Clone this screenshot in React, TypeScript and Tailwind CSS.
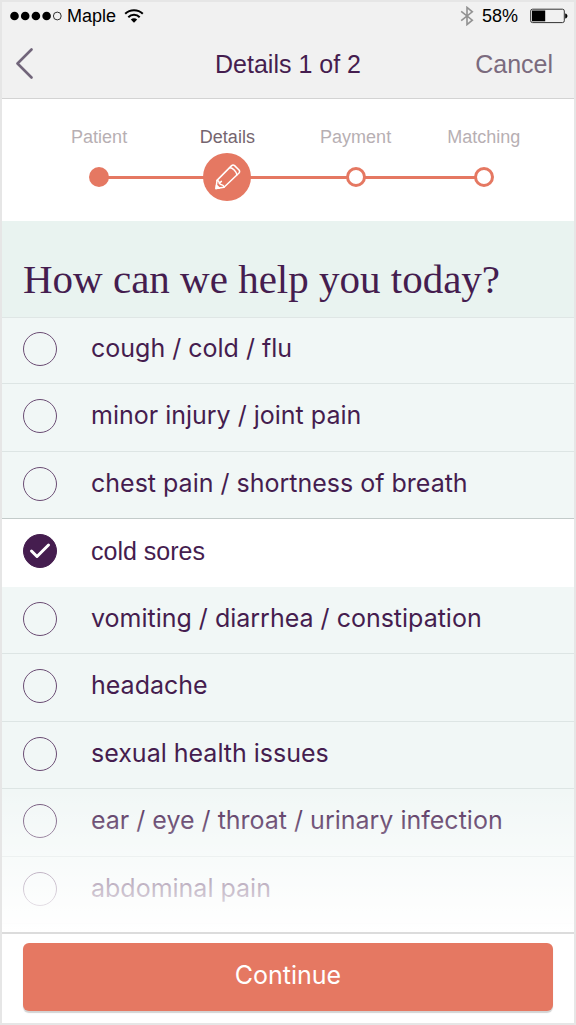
import { useState } from "react";

const steps = ["Patient", "Details", "Payment", "Matching"];
const currentStep = 1;

const symptoms = [
  "cough / cold / flu",
  "minor injury / joint pain",
  "chest pain / shortness of breath",
  "cold sores",
  "vomiting / diarrhea / constipation",
  "headache",
  "sexual health issues",
  "ear / eye / throat / urinary infection",
  "abdominal pain",
];

function StatusBar() {
  return (
    <div className="flex h-7 items-center justify-between pr-1.5 pl-2 text-[18px] leading-5 text-black">
      <div className="flex items-center">
        <svg width="53" height="12" viewBox="0 0 53 12" className="mr-1" aria-label="Signal strength">
          <circle cx="4.5" cy="6" r="4.3" />
          <circle cx="15.2" cy="6" r="4.3" />
          <circle cx="25.9" cy="6" r="4.3" />
          <circle cx="36.6" cy="6" r="4.3" />
          <circle cx="47.3" cy="6" r="3.9" fill="none" stroke="black" strokeWidth="0.8" />
        </svg>
        <span>Maple</span>
        <svg width="20" height="14" viewBox="0 0 20 14" className="ml-2" fill="none" stroke="black" strokeWidth="2" aria-label="Wi-Fi">
          <path d="M1.2 4.8 C6 0 14 0 18.8 4.8" />
          <path d="M4.3 8.2 C7.4 5 12.6 5 15.7 8.2" />
          <path d="M6.8 10.5 C8.6 8.8 11.4 8.8 13.2 10.5 L10 13.7 Z" fill="black" stroke="none" />
        </svg>
      </div>
      <div className="flex items-center">
        <svg width="14" height="20" viewBox="0 0 14 20" className="mr-2" fill="none" stroke="#929292" strokeWidth="1.6" aria-label="Bluetooth">
          <path d="M1.2 5.3 L12.3 14.2 L7 18.6 V1.4 L12.3 5.8 L1.2 14.7" />
        </svg>
        <span>58%</span>
        <svg width="38" height="16" viewBox="0 0 38 16" className="ml-3" aria-label="Battery">
          <rect x="0.7" y="1.2" width="33.6" height="13.4" rx="1.8" fill="none" stroke="#333" strokeWidth="1" />
          <rect x="2" y="2.5" width="13.2" height="10.8" />
          <path d="M35.2 5.4 C38.2 6 38.2 10 35.2 10.6 Z" />
        </svg>
      </div>
    </div>
  );
}

function NavBar() {
  return (
    <nav className="grid h-[68px] grid-cols-[1fr_auto_1fr] items-center px-[21px] text-[25px] leading-8">
      <button type="button" aria-label="Back" className="-ml-2 justify-self-start">
        <svg width="19" height="32" viewBox="0 0 19 32" fill="none" stroke="#71657a" strokeWidth="2.6" strokeLinecap="round" strokeLinejoin="round">
          <path d="M16.5 1.5 L2.5 15.5 L16.5 29.5" />
        </svg>
      </button>
      <h1 className="text-[#451d4f]">Details 1 of 2</h1>
      <button type="button" className="justify-self-end text-[#7b6b7e]">
        Cancel
      </button>
    </nav>
  );
}

function StepMarker({ index }: { index: number }) {
  if (index === currentStep) {
    return (
      <span className="relative flex size-12 items-center justify-center rounded-full bg-[#e57862]">
        <svg width="28" height="28" viewBox="0 0 28 28" fill="none" stroke="white" strokeWidth="1.5" strokeLinecap="round" strokeLinejoin="round" aria-hidden="true">
          <path d="M3 25.6 L4 17.4 L18.6 2.6 Q20 1.4 21.6 2.6 L26 7 Q27.2 8.6 26 10 L11 24.2 Z" />
          <path d="M16.6 4.8 Q18.8 4.6 21.2 7 Q24 9.8 23.8 12" />
          <path d="M4 17.4 Q6 17.6 6.4 20.2 Q7.2 21.8 8.6 21.8 Q10.6 22 11 24.2" />
          <path d="M6.4 20.2 L8.4 18.4" />
          <path d="M3 25.6 L3.5 22.2 L6.4 25 Z" fill="white" />
        </svg>
      </span>
    );
  }
  return (
    <span
      className={
        index < currentStep
          ? "relative size-5 rounded-full bg-[#e57862]"
          : "relative size-5 rounded-full border-3 border-[#e57862] bg-white"
      }
    />
  );
}

function Stepper() {
  return (
    <ol className="grid h-[123px] grid-cols-4 border-t border-[#d3d3d3] bg-white pt-7 pr-[26px] pl-[33px]">
      {steps.map((step, index) => (
        <li key={step} className="flex flex-col items-center" aria-current={index === currentStep ? "step" : undefined}>
          <span className={index === currentStep ? "text-[18px] leading-5 text-[#75656f]" : "text-[18px] leading-5 text-[#b7afb3]"}>
            {step}
          </span>
          <div className="relative mt-1.5 flex h-12 w-full items-center justify-center">
            {index > 0 && <span className="absolute left-0 h-[3px] w-1/2 bg-[#e57862]" />}
            {index < steps.length - 1 && <span className="absolute right-0 h-[3px] w-1/2 bg-[#e57862]" />}
            <StepMarker index={index} />
          </div>
        </li>
      ))}
    </ol>
  );
}

function SymptomRow({ label, checked, onToggle }: { label: string; checked: boolean; onToggle: () => void }) {
  return (
    <li
      className={
        checked
          ? "h-[67px] border-b border-white bg-white first:h-[66px] even:h-[68px]"
          : "h-[67px] border-b border-[#dde5e4] first:h-[66px] even:h-[68px] has-[+li_:checked]:border-[#c3cbca]"
      }
    >
      <label className="flex h-full cursor-pointer items-center gap-[34px] pb-[3px] pl-[21px]">
        <span className="grid size-[34px] shrink-0 place-items-center">
          <input
            type="checkbox"
            checked={checked}
            onChange={onToggle}
            className="col-start-1 row-start-1 size-[34px] appearance-none rounded-full border border-[#6b4d74] checked:border-[#451d4f] checked:bg-[#451d4f]"
          />
          {checked && (
            <svg width="22" height="18" viewBox="0 0 22 18" className="pointer-events-none col-start-1 row-start-1" fill="none" stroke="white" strokeWidth="3" strokeLinecap="round" strokeLinejoin="round" aria-hidden="true">
              <path d="M2.5 9 L8 14.5 L19.5 3" />
            </svg>
          )}
        </span>
        <span
          className={
            checked
              ? "text-[25px] leading-8"
              : "pb-0.5 font-['Inter','Liberation_Sans',sans-serif] text-[25px] leading-8"
          }
        >
          {label}
        </span>
      </label>
    </li>
  );
}

export default function App() {
  const [selected, setSelected] = useState<string[]>(["cold sores"]);

  const toggle = (label: string) =>
    setSelected((current) => (current.includes(label) ? current.filter((item) => item !== label) : [...current, label]));

  return (
    <div className="flex min-h-screen flex-col border-2 border-[#e6e6e6] bg-white font-['Liberation_Sans',Arial,sans-serif] text-[#451d4f]">
      <header className="bg-[#f1f1f1]">
        <StatusBar />
        <NavBar />
      </header>
      <Stepper />
      <main className="flex flex-1 flex-col bg-[#f1f7f6]">
        <div className="flex h-[97px] items-end border-b border-[#dfe6e5] bg-[#e9f3f0] px-[21px] pb-3.5">
          <h2 className="font-['Liberation_Serif','Times_New_Roman',serif] text-[41px] leading-12">How can we help you today?</h2>
        </div>
        <div className="relative flex-1">
          <ul>
            {symptoms.map((label) => (
              <SymptomRow key={label} label={label} checked={selected.includes(label)} onToggle={() => toggle(label)} />
            ))}
          </ul>
          <div className="pointer-events-none absolute inset-x-0 bottom-0 h-36 bg-linear-to-b from-white/0 to-white" />
        </div>
      </main>
      <footer className="border-t-2 border-[#dcdcdc] bg-white px-[21px] pt-[9px] pb-3">
        <button
          type="button"
          className="h-[68px] w-full rounded-md bg-[#e57862] pb-1 font-['Inter','Liberation_Sans',sans-serif] text-[25px] leading-8 text-white shadow-[0_2px_1px_#d3d3d3]"
        >
          Continue
        </button>
      </footer>
    </div>
  );
}
